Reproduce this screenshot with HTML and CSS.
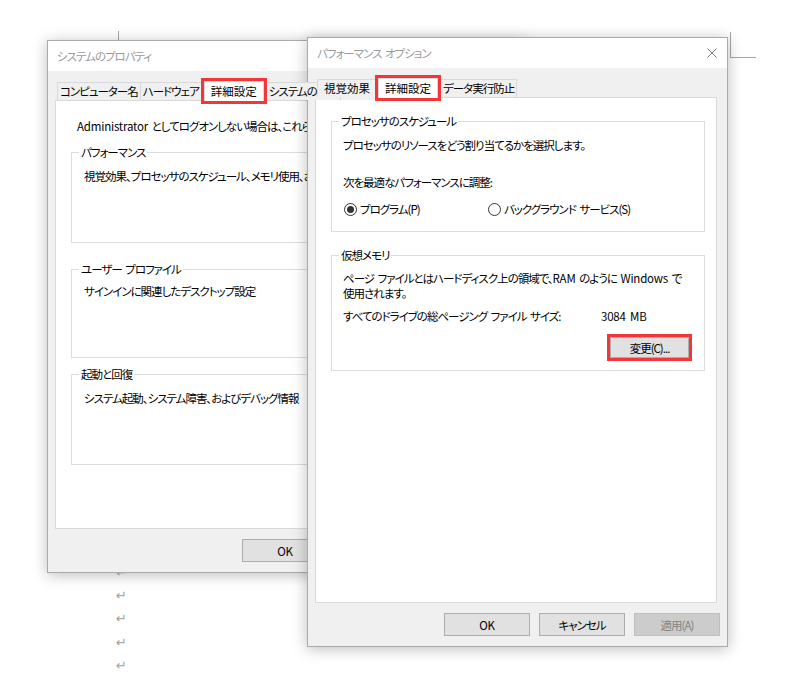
FILE: index.html
```html
<!DOCTYPE html>
<html lang="ja">
<head>
<meta charset="utf-8">
<title>パフォーマンス オプション</title>
<link rel="stylesheet" href="styles.css">
</head>
<body>
<div class="desk">
  <span class="crop crop-left"></span>
  <span class="crop crop-right"></span>

  <div class="doc">
    <p class="pmark">↵</p>
    <p class="pmark">↵</p>
    <p class="pmark">↵</p>
    <p class="pmark">↵</p>
    <p class="pmark">↵</p>
  </div>

  <section class="win win-sys">
    <header class="titlebar"><span class="title">システムのプロパティ</span></header>
    <div class="winbody">
      <div class="tabs">
        <span class="tab">コンピューター名</span>
        <span class="tab">ハードウェア</span>
        <span class="tab kanji active">詳細設定</span>
        <span class="tab">システムの保護</span>
        <span class="tab">リモート</span>
      </div>
      <div class="panel panel-sys">
        <p class="note"><span class="lat">Administrator</span> としてログオンしない場合は、これらのほとんどは変更できません。</p>
        <fieldset class="group sgroup g1">
          <legend>パフォーマンス</legend>
          <p class="desc">視覚効果、プロセッサのスケジュール、メモリ使用、および仮想メモリ</p>
        </fieldset>
        <fieldset class="group sgroup g2">
          <legend>ユーザー プロファイル</legend>
          <p class="desc">サインインに関連したデスクトップ設定</p>
        </fieldset>
        <fieldset class="group sgroup g3">
          <legend>起動と回復</legend>
          <p class="desc">システム起動、システム障害、およびデバッグ情報</p>
        </fieldset>
      </div>
      <div class="buttons">
        <button class="btn" type="button"><span class="lat">OK</span></button>
        <button class="btn" type="button">キャンセル</button>
        <button class="btn" type="button" disabled>適用(A)</button>
      </div>
    </div>
  </section>

  <section class="win win-perf">
    <header class="titlebar">
      <span class="title">パフォーマンス オプション</span>
      <svg class="close" width="10" height="10" viewBox="0 0 10 10" aria-hidden="true">
        <path d="M0.5 0.5 L9.5 9.5 M9.5 0.5 L0.5 9.5" stroke="#7a7a7a" stroke-width="1" fill="none"/>
      </svg>
    </header>
    <div class="winbody">
      <div class="tabs">
        <span class="tab kanji">視覚効果</span>
        <span class="tab kanji active">詳細設定</span>
        <span class="tab">データ実行防止</span>
      </div>
      <div class="panel panel-perf">
        <fieldset class="group pgroup sched">
          <legend>プロセッサのスケジュール</legend>
          <p class="line">プロセッサのリソースをどう割り当てるかを選択します。</p>
          <p class="line adjust">次を最適なパフォーマンスに調整:</p>
          <div class="radios">
            <label class="opt opt-first"><span class="radio checked"></span><span class="rlabel">プログラム(P)</span></label>
            <label class="opt"><span class="radio"></span><span class="rlabel">バックグラウンド サービス(S)</span></label>
          </div>
        </fieldset>
        <fieldset class="group pgroup vmem">
          <legend>仮想メモリ</legend>
          <p class="para">ページ ファイルとはハードディスク上の領域で、<span class="lat">RAM</span> のように <span class="lat">Windows</span> で<br>使用されます。</p>
          <div class="sizerow"><span class="sizelabel">すべてのドライブの総ページング ファイル サイズ:</span><span class="lat">3084 MB</span></div>
          <div class="changerow"><button class="btn btn-change" type="button">変更(C)...</button></div>
        </fieldset>
      </div>
      <div class="buttons">
        <button class="btn" type="button"><span class="lat">OK</span></button>
        <button class="btn" type="button">キャンセル</button>
        <button class="btn" type="button" disabled>適用(A)</button>
      </div>
    </div>
  </section>
</div>
</body>
</html>
```

FILE: styles.css
```css
* { box-sizing: border-box; }

html, body {
  margin: 0;
  padding: 0;
}

body {
  width: 800px;
  height: 680px;
  overflow: hidden;
  background: #ffffff;
  color: #000000;
  font-family: "Noto Sans CJK JP", "Noto Sans", sans-serif;
  font-size: 11.5px;
  letter-spacing: -1px;
  word-spacing: 2px;
  font-feature-settings: "palt";
}

.lat { letter-spacing: -0.2px; }

.desk {
  position: relative;
  width: 800px;
  height: 680px;
}

/* Word page crop marks */
.crop {
  position: absolute;
  width: 26px;
  height: 26px;
}
.crop-left {
  left: 93px;
  top: 31px;
  border-right: 1px solid #a6a6a6;
  border-bottom: 1px solid #a6a6a6;
}
.crop-right {
  left: 730px;
  top: 32px;
  border-left: 1px solid #a6a6a6;
  border-bottom: 1px solid #a6a6a6;
}

/* document paragraph marks */
.doc {
  padding: 561px 0 0 116px;
}
.pmark {
  margin: 0;
  height: 23.2px;
  line-height: 23px;
  font-family: "DejaVu Sans", sans-serif;
  font-size: 13px;
  letter-spacing: 0;
  color: #a0a0a0;
}

/* windows */
.win {
  position: absolute;
  display: flex;
  flex-direction: column;
  background: #f0f0f0;
  border: 1px solid #aaaaaa;
  box-shadow: 0 2px 14px rgba(0, 0, 0, 0.26);
}
.win-sys {
  left: 47px;
  top: 40px;
  width: 479px;
  height: 533px;
}
.win-perf {
  left: 307px;
  top: 37px;
  width: 421px;
  height: 610px;
}

.titlebar {
  height: 30px;
  flex: none;
  display: flex;
  align-items: center;
  justify-content: space-between;
  padding: 0 10px 0 9px;
  background: #ffffff;
  color: #9a9a9a;
}
.title { white-space: nowrap; }
.close { display: block; }

.winbody {
  flex: 1;
  min-height: 0;
  display: flex;
  flex-direction: column;
  padding: 10px 10px 10px 7px;
}

/* tabs */
.tabs {
  position: relative;
  z-index: 2;
  display: flex;
  align-items: flex-end;
  height: 20px;
  margin-bottom: -1px;
  padding-left: 2px;
  flex: none;
}
.tab {
  height: 18px;
  margin-bottom: 1px;
  margin-left: -1px;
  padding: 0 2px;
  border: 1px solid #d9d9d9;
  border-bottom: none;
  background: #f0f0f0;
  line-height: 17px;
  white-space: nowrap;
}
.tab:first-child { margin-left: 0; }
.tab.kanji {
  padding: 0 5px 0 6px;
  letter-spacing: 0;
}
.tab.active {
  position: relative;
  z-index: 3;
  height: 20px;
  margin: 0 3px 0 2px;
  padding: 0 6px;
  background: #ffffff;
  outline: 3px solid #f0383a;
  line-height: 19px;
}

/* panel */
.panel {
  flex: 1;
  min-height: 0;
  background: #ffffff;
  border: 1px solid #d9d9d9;
  overflow: hidden;
}

/* group boxes */
.group {
  margin: 0;
  border: 1px solid #dcdcdc;
  min-width: 0;
}
.group legend {
  padding: 0 2px;
  line-height: 16px;
}
.group p {
  margin: 0;
}

/* system properties panel */
.panel-sys {
  padding: 17px 15px 0 15px;
}
.note {
  margin: 0 0 10px 6px;
  line-height: 16px;
  white-space: nowrap;
}
.sgroup {
  padding: 8px 0 58px 12px;
}
.sgroup legend {
  margin-left: -5px;
}
.sgroup .desc {
  line-height: 16px;
  white-space: nowrap;
}
.sgroup.g2 {
  margin-top: 18px;
  padding-top: 6px;
}
.sgroup.g3 {
  margin-top: 8px;
}

/* performance options panel */
.panel-perf {
  padding: 15px 11px 0 15px;
}
.pgroup {
  padding: 8px 15px 14px 11px;
}
.pgroup legend {
  margin-left: -4px;
}
.line {
  line-height: 16px;
  white-space: nowrap;
}
.adjust {
  margin-top: 21px !important;
}
.radios {
  display: flex;
  align-items: center;
  height: 16px;
  margin-top: 11px;
}
.opt {
  display: flex;
  align-items: center;
  padding-left: 1px;
  white-space: nowrap;
}
.opt-first { width: 144px; }
.radio {
  position: relative;
  width: 13px;
  height: 13px;
  border: 1px solid #333333;
  border-radius: 50%;
  background: #ffffff;
  flex: none;
}
.radio.checked::after {
  content: "";
  position: absolute;
  left: 2px;
  top: 2px;
  width: 7px;
  height: 7px;
  border-radius: 50%;
  background: #333333;
}
.rlabel { margin-left: 3px; }

.vmem {
  margin-top: 15px;
  padding-bottom: 12px;
}
.para {
  line-height: 15px;
  white-space: nowrap;
}
.sizerow {
  display: flex;
  margin-top: 7px;
  line-height: 16px;
  white-space: nowrap;
}
.sizelabel { width: 258px; flex: none; }
.changerow {
  display: flex;
  justify-content: flex-end;
  margin-top: 13px;
}

/* buttons */
.buttons {
  display: flex;
  justify-content: flex-end;
  gap: 9px;
  flex: none;
  padding-top: 10px;
  margin-right: -3px;
}
.btn {
  width: 86px;
  height: 23px;
  padding: 0;
  margin: 0;
  border: 1px solid #adadad;
  background: #e1e1e1;
  color: #000000;
  font: inherit;
  letter-spacing: -1px;
  word-spacing: 2px;
  font-feature-settings: "palt";
  line-height: 20px;
}
.btn:disabled {
  background: #cccccc;
  border-color: #bfbfbf;
  color: #838383;
}
.btn-change {
  width: 79px;
  height: 21px;
  line-height: 18px;
  outline: 3px solid #f0383a;
}
```
